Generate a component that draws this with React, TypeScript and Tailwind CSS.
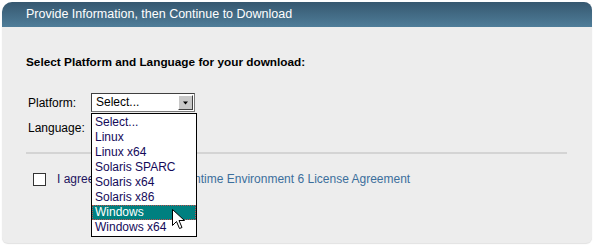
import React from "react";

const platforms = [
  "Select...",
  "Linux",
  "Linux x64",
  "Solaris SPARC",
  "Solaris x64",
  "Solaris x86",
  "Windows",
  "Windows x64",
];

function Cursor() {
  return (
    <svg width="14" height="22" viewBox="0 0 14 22" className="absolute left-[172px] top-[209px]">
      <path
        d="M0.5 0.5 L0.5 16.5 L4.5 12.5 L7.5 19.5 L10 18.5 L7 11.5 L12.5 11.5 Z"
        fill="#fff"
        stroke="#000"
        strokeWidth="1"
        strokeLinejoin="miter"
      />
    </svg>
  );
}

export default function App() {
  return (
    <div className="relative w-[594px] h-[246px] bg-white font-['Liberation_Sans',Arial,sans-serif] p-[2px]">
      <div className="w-[590px] h-[241px] rounded-tl-[10px] rounded-tr-[8px] rounded-b-[6px] bg-[#ededed] overflow-hidden shadow-[0_1px_1px_rgba(0,0,0,0.12)]">
        <div className="h-[25px] bg-gradient-to-b from-[#365870] to-[#4f7d99] pl-[24px] text-[12.5px] leading-[25px] text-white">
          Provide Information, then Continue to Download
        </div>
        <div className="pl-[24px] pr-[25px] pt-[28px]">
          <h2 className="text-[11.8px] leading-[14px] font-bold text-black">
            Select Platform and Language for your download:
          </h2>
          <div className="mt-[24px] flex items-center pl-[2px] text-[12px] text-black">
            <span className="w-[63px]">Platform:</span>
            <div className="flex h-[19px] w-[104px] items-center border border-[#7a7a7a] border-t-[#404040] border-l-[#404040] bg-white">
              <span className="flex-1 pl-[4px] text-[12px] leading-[17px]">Select...</span>
              <span className="m-[1px] flex h-[15px] w-[15px] items-center justify-center border border-[#404040] border-t-[#fff] border-l-[#fff] bg-[#c8c8c8]">
                <svg width="7" height="4" viewBox="0 0 7 4">
                  <path d="M1 0.5 L6 0.5 L3.5 3.5 Z" fill="#000" />
                </svg>
              </span>
            </div>
          </div>
          <div className="mt-[6px] pl-[2px] text-[12px] leading-[20px] text-black">Language:</div>
          <div className="mt-[14px] h-[2px] w-[541px] bg-[#d4d4d4]" />
          <div className="mt-[17px] flex items-center pl-[7px] text-[12px] leading-[16px]">
            <span className="h-[13px] w-[13px] border border-[#333] bg-white" />
            <span className="ml-[11px] text-[#1e1460]">I agree to the </span>
            <span className="ml-[3px] text-[#3c6f9c]">Java SE Runtime Environment 6 License Agreement</span>
          </div>
        </div>
      </div>

      <ul className="absolute left-[91px] top-[113px] w-[106px] border border-black bg-white py-[1px] text-[12px] leading-[13px] text-[#140a5a]">
        {platforms.map((p) => (
          <li
            key={p}
            className={
              p === "Windows"
                ? "border border-dotted border-[#c05050] bg-[#008080] pl-[2px] text-white"
                : "border border-transparent pl-[2px]"
            }
          >
            {p}
          </li>
        ))}
      </ul>
      <Cursor />
    </div>
  );
}
